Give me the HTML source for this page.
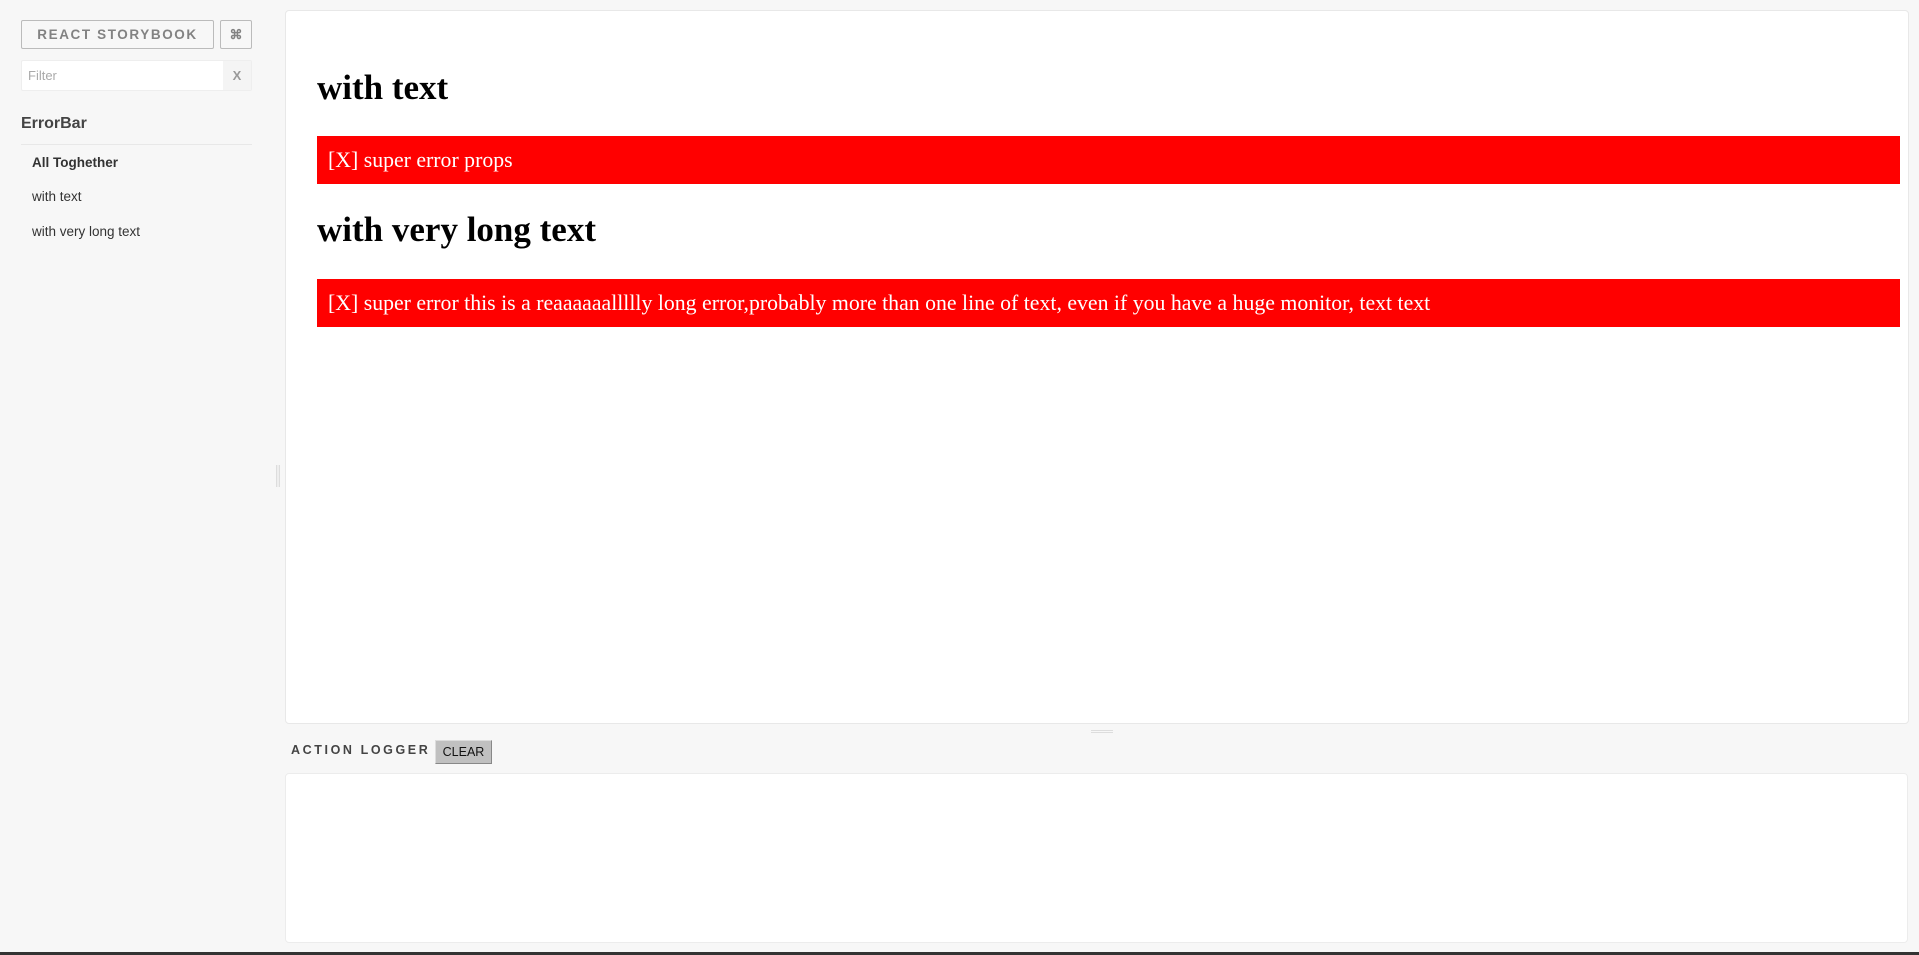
<!DOCTYPE html>
<html><head><meta charset="utf-8"><style>
*{box-sizing:border-box;margin:0;padding:0}
html,body{width:1919px;height:955px;overflow:hidden;background:#f7f7f7;font-family:"Liberation Sans",Arial,sans-serif;position:relative}
.abs{position:absolute}
.btn{left:21px;top:20px;width:193px;height:29px;border:1px solid #bbb;border-radius:2px;color:#828282;font-weight:bold;font-size:13.5px;letter-spacing:1.6px;text-align:center;line-height:27px}
.cmd{left:220px;top:20px;width:32px;height:29px;border:1px solid #bbb;border-radius:2px;color:#828282;font-size:13px;text-align:center;line-height:27px;font-weight:bold}
.filter{left:21px;top:60px;width:231px;height:31px;background:#fff;border:1px solid #eee;border-radius:2px}
.filter span{position:absolute;left:6px;top:7px;font-size:13px;color:#aaa}
.filter b{position:absolute;right:0;top:0;width:28px;height:29px;background:#f4f4f4;color:#999;font-size:13px;text-align:center;line-height:29px}
.kind{left:21px;top:115px;font-size:16px;font-weight:bold;color:#444}
.hr{left:21px;top:144px;width:231px;height:1px;background:#e8e8e8}
.item{left:32px;font-size:13.5px;color:#333}
.panel{left:285px;top:10px;width:1624px;height:714px;background:#fff;border:1px solid #e8e8e8;border-radius:4px}
h1{position:absolute;left:317px;font-family:"Liberation Serif",serif;font-weight:bold;font-size:35px;color:#000}
.bar{position:absolute;left:317px;width:1583px;height:48px;background:#f00;color:#fff;font-family:"Liberation Serif",serif;font-size:21.8px;line-height:48px;padding-left:11px;white-space:nowrap}
.al{left:291px;top:743px;font-size:12.5px;font-weight:bold;letter-spacing:2.6px;color:#444}
.clear{left:435px;top:740px;width:57px;height:24px;background:#c0c0c0;border:1px solid #888;border-top-color:#ddd;border-left-color:#ddd;font-size:12.5px;text-align:center;line-height:22px;color:#111}
.log{left:285px;top:773px;width:1623px;height:170px;background:#fff;border:1px solid #ececec;border-radius:4px}
</style></head><body>
<div class="abs btn">REACT STORYBOOK</div>
<div class="abs cmd">⌘</div>
<div class="abs filter"><span>Filter</span><b>X</b></div>
<div class="abs kind">ErrorBar</div>
<div class="abs hr"></div>
<div class="abs item" style="top:155px;font-weight:bold">All Toghether</div>
<div class="abs item" style="top:189px">with text</div>
<div class="abs item" style="top:224px">with very long text</div>
<div class="abs" style="left:276px;top:465px;width:4px;height:22px;border-left:1px solid #ddd;border-right:1px solid #ddd;background:#eee"></div>
<div class="abs panel"></div>
<h1 style="top:68px">with text</h1>
<div class="bar" style="top:136px">[X] super error props</div>
<h1 style="top:210px">with very long text</h1>
<div class="bar" style="top:279px">[X] super error this is a reaaaaaallllly long error,probably more than one line of text, even if you have a huge monitor, text text</div>
<div class="abs" style="left:1091px;top:730px;width:22px;height:3px;border-top:1px solid #ddd;border-bottom:1px solid #ddd"></div>
<div class="abs al">ACTION LOGGER</div>
<div class="abs clear">CLEAR</div>
<div class="abs log"></div>
<div class="abs" style="left:0;top:952px;width:1919px;height:3px;background:#333"></div>
</body></html>
